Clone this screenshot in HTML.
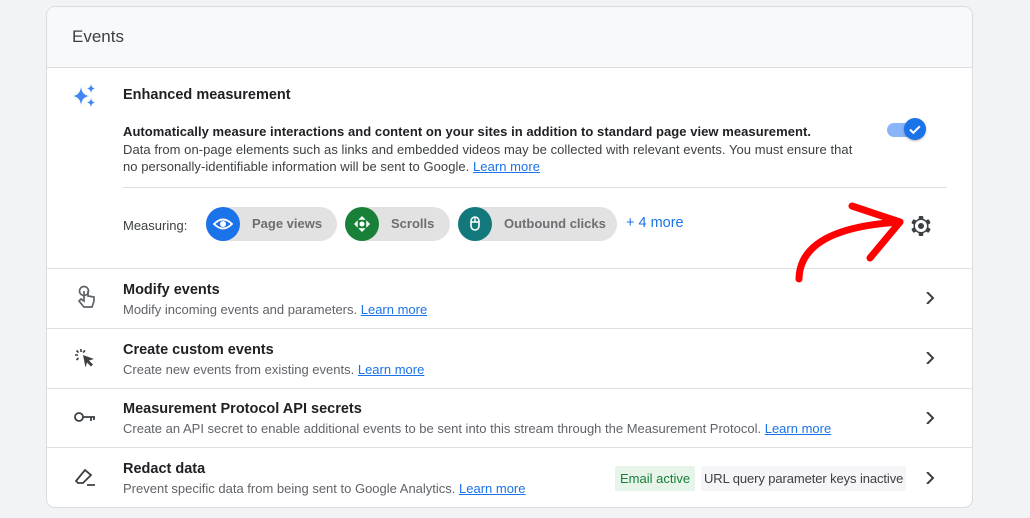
<!DOCTYPE html>
<html><head><meta charset="utf-8">
<style>
*{box-sizing:border-box;margin:0;padding:0}
body{width:1030px;height:518px;background:#f1f3f4;font-family:"Liberation Sans",Arial,sans-serif;color:#202124;position:relative;overflow:hidden}
.card{position:absolute;left:46px;top:6px;width:927px;height:502px;background:#fff;border:1px solid #dadce0;border-radius:9px;overflow:hidden}
.hdr{height:61px;background:#f8f9fa;border-bottom:1px solid #dadce0;padding:20px 0 0 25px;font-size:17px;color:#3c4043}
.abs{position:absolute}
.t{font-size:14.5px;font-weight:bold;color:#202124}
.s{font-size:13px;color:#5f6368}
a{color:#1a73e8;text-decoration:underline}
.sep{position:absolute;left:0;right:0;height:1px;background:#e0e0e0}
.chip{position:absolute;top:200px;height:34px;border-radius:17px;background:#e2e2e2;font-size:13px;font-weight:bold;color:#6b6e72;line-height:34px}
.chip .c{position:absolute;left:0;top:0;width:34px;height:34px;border-radius:50%}
.chev{position:absolute;left:877px;width:12px;height:12px}
</style></head><body>
<div class="card">
<div class="hdr">Events</div>
<svg class="abs" style="left:24px;top:76px" width="28" height="28" viewBox="0 0 28 28"><path d="M10 4 Q11 12 18 13 Q11 14 10 22 Q9 14 2 13 Q9 12 10 4Z" fill="#4285f4"/><path d="M20 1 Q20.5 5 24 5.5 Q20.5 6 20 10 Q19.5 6 16 5.5 Q19.5 5 20 1Z" fill="#4285f4"/><path d="M20 15 Q20.5 19 24 19.5 Q20.5 20 20 24 Q19.5 20 16 19.5 Q19.5 19 20 15Z" fill="#4285f4"/></svg>
<div class="abs t" style="left:76px;top:80px">Enhanced measurement</div>
<div class="abs" style="left:76px;top:116px;font-size:13px;line-height:17.5px;width:738px;color:#3c4043;letter-spacing:0.05px"><b style="color:#202124;white-space:nowrap">Automatically measure interactions and content on your sites in addition to standard page view measurement.</b><br>Data from on-page elements such as links and embedded videos may be collected with relevant events. You must ensure that no personally-identifiable information will be sent to Google. <a>Learn more</a></div>
<div class="abs" style="left:840px;top:116px;width:30px;height:14px;border-radius:7px;background:#8ab4f8"></div>
<div class="abs" style="left:857px;top:111px;width:22px;height:22px;border-radius:50%;background:#1a73e8;box-shadow:0 1px 2px rgba(0,0,0,.3)"><svg width="22" height="22"><path d="M6 11.5l3.3 3.3 6.5-6.5" stroke="#fff" stroke-width="2" fill="none"/></svg></div>
<div class="abs" style="left:76px;top:180px;width:824px;height:1px;background:#e0e0e0"></div>
<div class="abs" style="left:76px;top:211px;font-size:13px;color:#3c4043">Measuring:</div>
<div class="chip" style="left:159px;width:131px"><div class="c" style="background:#1a73e8"><svg width="34" height="34"><path d="M8 17 Q17 8 26 17 Q17 26 8 17Z" fill="none" stroke="#fff" stroke-width="1.8"/><circle cx="17" cy="17" r="3" fill="#fff"/></svg></div><span style="margin-left:46px">Page views</span></div>
<div class="chip" style="left:298px;width:105px"><div class="c" style="background:#188038"><svg width="34" height="34"><circle cx="17" cy="17" r="2.5" fill="#fff"/><path d="M17 10l-2 2h4zM17 24l-2-2h4zM10 17l2-2v4zM24 17l-2-2v4z" stroke="#fff" stroke-width="1.4" fill="none"/></svg></div><span style="margin-left:46px">Scrolls</span></div>
<div class="chip" style="left:411px;width:159px"><div class="c" style="background:#12787b"><svg width="34" height="34"><rect x="13" y="10" width="8" height="13" rx="4" fill="none" stroke="#fff" stroke-width="1.6"/><path d="M13 15h8M17 10v5" stroke="#fff" stroke-width="1.4"/></svg></div><span style="margin-left:46px">Outbound clicks</span></div>
<div class="abs" style="left:579px;top:208px;font-size:14.5px;color:#1a73e8">+ 4 more</div>
<svg class="abs" style="left:863px;top:208px" width="22" height="22" viewBox="0 0 22 22">
<g fill="#3c4043" transform="translate(11 11)">
<rect x="-2.3" y="-10" width="4.6" height="20" rx="1"/>
<rect x="-2.3" y="-10" width="4.6" height="20" rx="1" transform="rotate(60)"/>
<rect x="-2.3" y="-10" width="4.6" height="20" rx="1" transform="rotate(120)"/>
<circle r="7.5"/>
</g>
<circle cx="11" cy="11" r="6" fill="#fff"/>
<circle cx="11" cy="11" r="3" fill="#3c4043"/>
</svg>
<div class="sep" style="top:261px"></div>
<div class="sep" style="top:321px"></div>
<div class="sep" style="top:381px"></div>
<div class="sep" style="top:440px"></div>
<svg class="abs" style="left:28px;top:278px" width="22" height="24" viewBox="0 0 22 24" fill="none" stroke="#5f6368" stroke-width="1.7"><circle cx="9" cy="6" r="4.5"/><path d="M9 6v10l-3-2-2 2 5 6h8l2-6v-4l-6-1V6"/></svg>
<div class="abs t" style="left:76px;top:275px">Modify events</div>
<div class="abs s" style="left:76px;top:295px">Modify incoming events and parameters. <a>Learn more</a></div>
<svg class="abs" style="left:26px;top:340px" width="24" height="22" viewBox="0 0 24 22"><path d="M10 8l11 4-5 1.5 4 4-2 2-4-4-1.5 5z" fill="#3c4043"/><path d="M8 2v3M2 8h3M3.5 3.5l2 2M3.5 13l2-2M12 3.5l-2 2" stroke="#3c4043" stroke-width="1.6"/></svg>
<div class="abs t" style="left:76px;top:335px">Create custom events</div>
<div class="abs s" style="left:76px;top:355px">Create new events from existing events. <a>Learn more</a></div>
<svg class="abs" style="left:26px;top:402px" width="24" height="16" viewBox="0 0 24 16" fill="none" stroke="#3c4043" stroke-width="1.8"><circle cx="6" cy="8" r="4"/><path d="M10 8h12M18 8v4M21 8v3"/></svg>
<div class="abs t" style="left:76px;top:394px">Measurement Protocol API secrets</div>
<div class="abs s" style="left:76px;top:414px">Create an API secret to enable additional events to be sent into this stream through the Measurement Protocol. <a>Learn more</a></div>
<svg class="abs" style="left:26px;top:459px" width="24" height="22" viewBox="0 0 24 22" fill="none" stroke="#3c4043" stroke-width="1.8"><path d="M3 15l9-11 6 5-8 8H5z"/><path d="M14 19h8"/></svg>
<div class="abs t" style="left:76px;top:454px">Redact data</div>
<div class="abs s" style="left:76px;top:474px">Prevent specific data from being sent to Google Analytics. <a>Learn more</a></div>
<div class="abs" style="left:568px;top:459px;height:25px;padding:0 5px;line-height:25px;background:#e6f4ea;color:#188038;font-size:13px;border-radius:2px">Email active</div>
<div class="abs" style="left:654px;top:459px;height:25px;padding:0 3px;line-height:25px;background:#f5f5f7;color:#3c4043;font-size:13px;border-radius:2px;letter-spacing:-0.1px">URL query parameter keys inactive</div>
<svg class="chev" style="top:285px" viewBox="0 0 12 12"><path d="M3 0l6 6-6 6" fill="none" stroke="#3c4043" stroke-width="2"/></svg>
<svg class="chev" style="top:345px" viewBox="0 0 12 12"><path d="M3 0l6 6-6 6" fill="none" stroke="#3c4043" stroke-width="2"/></svg>
<svg class="chev" style="top:405px" viewBox="0 0 12 12"><path d="M3 0l6 6-6 6" fill="none" stroke="#3c4043" stroke-width="2"/></svg>
<svg class="chev" style="top:465px" viewBox="0 0 12 12"><path d="M3 0l6 6-6 6" fill="none" stroke="#3c4043" stroke-width="2"/></svg>
</div>
<svg class="abs" style="left:0;top:0" width="1030" height="518"><path d="M799 279 Q800 228 900 222 M852 206 L900 222 L870 258" fill="none" stroke="#f00" stroke-width="7" stroke-linecap="round" stroke-linejoin="round"/></svg>
</body></html>
